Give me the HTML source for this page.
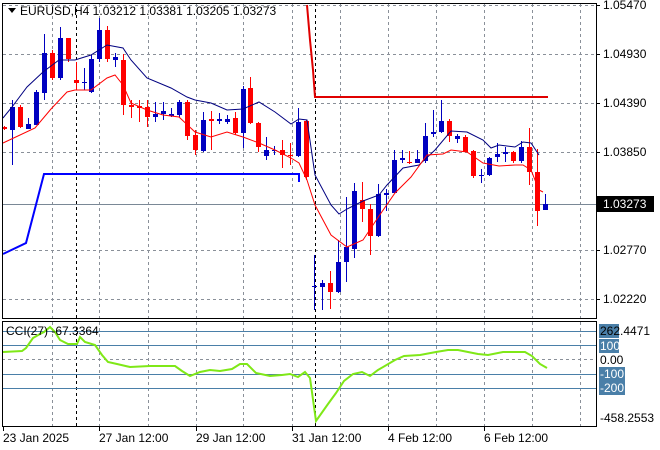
<!DOCTYPE html>
<html><head><meta charset="utf-8"><style>
body{margin:0;background:#fff;width:660px;height:450px;overflow:hidden}
svg{display:block}
text{font-family:"Liberation Sans",sans-serif;font-size:12px;fill:#000}
</style></head><body>
<svg id="s" width="660" height="450" xmlns="http://www.w3.org/2000/svg">
<rect width="660" height="450" fill="#fff"/>
<g id="grid" stroke="#8a9099" stroke-dasharray="3,3" stroke-width="1"></g>
<line x1="76.5" y1="3" x2="76.5" y2="426" stroke="#000" stroke-dasharray="3,3"/>
<line x1="315.5" y1="3" x2="315.5" y2="426" stroke="#000" stroke-dasharray="3,3"/>
<line x1="2" y1="204.5" x2="596" y2="204.5" stroke="#7a8896"/>
<g id="cci" stroke="#4a7fa8" stroke-width="1">
<line x1="2" y1="331.5" x2="596" y2="331.5"/><line x1="2" y1="345.5" x2="596" y2="345.5"/>
<line x1="2" y1="374.5" x2="596" y2="374.5"/><line x1="2" y1="388.5" x2="596" y2="388.5"/>
</g>
<line x1="2" y1="359.5" x2="596" y2="359.5" stroke="#8a9099" stroke-dasharray="3,3"/>
<polyline fill="none" stroke="#0000ff" stroke-width="2" points="3,254 26,243 44,174 299,174 299,182"/>
<polyline fill="none" stroke="#e00000" stroke-width="2" points="307,5 310,40 313,70 315,97 548,97"/>
<g id="candles"></g>
<polyline fill="none" stroke="#000080" stroke-width="1" points="3,118 12,107 27,87 43,72 59,60 75,60 91,55 107,45 123,48 131,60 147,78 171,88 187,97 195,100 211,103 227,110 243,109 259,102 275,112 291,124 299,119 307,120 315,175 331,205 339,214 347,209 363,201 379,195 387,185 403,168 419,165 435,150 451,131 467,132 483,140 491,148 499,145 515,147 523,142 531,143 539,155"/>
<polyline fill="none" stroke="#ff0000" stroke-width="1" points="3,143 35,128 51,109 67,92 75,90 91,90 107,78 115,75 123,85 131,103 147,110 163,115 179,117 195,132 211,137 227,132 243,137 259,143 275,150 291,158 299,163 307,180 315,205 331,235 347,247 363,240 379,216 395,193 411,177 427,155 443,154 451,150 467,152 483,163 499,166 515,165 523,165 531,170 539,190 543,192"/>
<polyline fill="none" stroke="#7fe817" stroke-width="2" points="3,352 22,351 26,348 33,338 40,334 44,332 50,327 55,332 60,340 68,344 77,344 80,337 85,342 95,345 102,355 108,362 117,364 130,367 150,366 175,366 182,371 190,376 200,372 210,370 220,371 232,369 240,364 247,364 256,373 270,376 282,375 290,374 298,377 305,372 310,378 316,421 328,404 336,393 344,381 353,374 362,372 370,376 378,370 395,360 404,356 420,355 436,352 448,350 458,350 468,352 478,354 488,355 503,352 515,352 525,352 532,356 540,364 547,368"/>
<rect x="2.5" y="3.5" width="594" height="315" fill="none" stroke="#000"/>
<rect x="2.5" y="321.5" width="594" height="105" fill="none" stroke="#000"/>
<g id="ticks" stroke="#000"></g>
<path d="M8,8 L16,8 L12,13 Z" fill="#000"/>
<text x="20" y="15">EURUSD,H4  1.03212 1.03381 1.03205 1.03273</text>
<text x="6" y="335">CCI(27) -67.3364</text>
<g>
<text x="603" y="9">1.05470</text><text x="603" y="58">1.04930</text><text x="603" y="107">1.04390</text>
<text x="603" y="156">1.03850</text><text x="603" y="254">1.02770</text><text x="603" y="303">1.02220</text>
<rect x="597" y="196" width="57" height="16" fill="#000"/><text x="603" y="208" style="fill:#fff">1.03273</text>
<rect x="599" y="324" width="20" height="14" fill="#4a7fa8"/><text x="600" y="335">262.4471</text>
<rect x="599" y="339" width="20" height="14" fill="#4a7fa8"/><text x="600" y="350" style="fill:#fff">100</text>
<text x="600" y="364">0.00</text>
<rect x="599" y="367" width="26" height="14" fill="#4a7fa8"/><text x="600" y="378" style="fill:#fff">-100</text>
<rect x="599" y="381" width="26" height="14" fill="#4a7fa8"/><text x="600" y="392" style="fill:#fff">-200</text>
<text x="600" y="422">-458.2553</text>
</g>
<g>
<text x="3" y="442">23 Jan 2025</text><text x="99" y="442">27 Jan 12:00</text><text x="196" y="442">29 Jan 12:00</text>
<text x="292" y="442">31 Jan 12:00</text><text x="388" y="442">4 Feb 12:00</text><text x="484" y="442">6 Feb 12:00</text>
</g>
</svg>
<script>
var NS="http://www.w3.org/2000/svg";
function el(p,t,a){var e=document.createElementNS(NS,t);for(var k in a)e.setAttribute(k,a[k]);p.appendChild(e);return e;}
var g=document.getElementById('grid');
[52,99,148,196,243,292,340,388,436,484,532,580].forEach(function(x){el(g,'line',{x1:x+.5,y1:4,x2:x+.5,y2:318});el(g,'line',{x1:x+.5,y1:322,x2:x+.5,y2:426});});
[5,54,103,152,250,299].forEach(function(y){el(g,'line',{x1:3,y1:y+.5,x2:596,y2:y+.5});});
var tk=document.getElementById('ticks');
[5,54,103,152,204,250,299].forEach(function(y){el(tk,'line',{x1:597,y1:y+.5,x2:600,y2:y+.5});});
[3,99,196,292,388,484].forEach(function(x){el(tk,'line',{x1:x+.5,y1:427,x2:x+.5,y2:431});});
var C=[
['r',127,129,126,130],['b',107,130,100,165],['r',107,127,105,128],['b',124,129,118,129],['b',92,125,90,125],
['b',53,93,34,100],['r',53,78,50,80],['b',38,78,27,80],['r',38,59,38,62],['r',80,83,62,90],
['b',82,83,68,90],['b',59,92,55,93],['b',30,59,18,62],['r',30,59,26,62],['b',57,60,53,67],
['r',60,105,54,115],['r',105,107,100,118],['r',106,108,100,122],['r',107,117,100,127],['b',114,117,102,122],
['b',111,114,102,120],['b',114,116,108,117],['b',102,115,100,117],['r',102,136,100,140],['r',135,150,130,155],
['b',120,151,112,152],['r',119,121,111,150],['b',119,121,113,124],['b',119,122,115,124],['r',118,133,112,135],
['b',89,133,86,148],['r',88,123,77,124],['r',123,147,122,152],['b',150,156,137,160],['b',150,151,146,155],
['r',150,155,140,168],['r',155,156,143,165],['b',122,156,108,157],['r',121,177,120,180],['b',286,287,255,310],
['b',283,287,280,310],['r',283,292,271,309],['b',262,292,240,293],['b',247,262,197,282],['b',191,249,183,258],
['r',200,209,182,222],['r',209,236,204,255],['b',194,236,184,237],['b',193,195,189,211],['b',160,193,150,193],
['b',158,160,150,163],['r',162,163,151,164],['b',159,163,150,162],['b',136,161,123,163],['b',132,134,110,137],
['b',121,132,100,133],['r',121,136,119,142],['b',136,139,134,143],['r',137,152,135,152],['r',151,176,150,178],
['b',175,176,169,183],['b',158,175,157,176],['b',154,157,143,162],['b',152,154,147,162],['r',152,161,151,163],
['b',147,161,141,163],['r',147,172,128,185],['r',172,211,149,226],['b',204,210,194,210]];
var cg=document.getElementById('candles');
C.forEach(function(c,i){var x=4+7.95*i,col=c[0]=='r'?'#ff0000':'#0000c0';var xr=Math.round(x);
el(cg,'line',{x1:xr+.5,y1:c[3],x2:xr+.5,y2:c[4],stroke:col,'stroke-width':1});
el(cg,'rect',{x:xr-2,y:c[1],width:5,height:Math.max(1,c[2]-c[1]),fill:col});});
</script>
</body></html>
